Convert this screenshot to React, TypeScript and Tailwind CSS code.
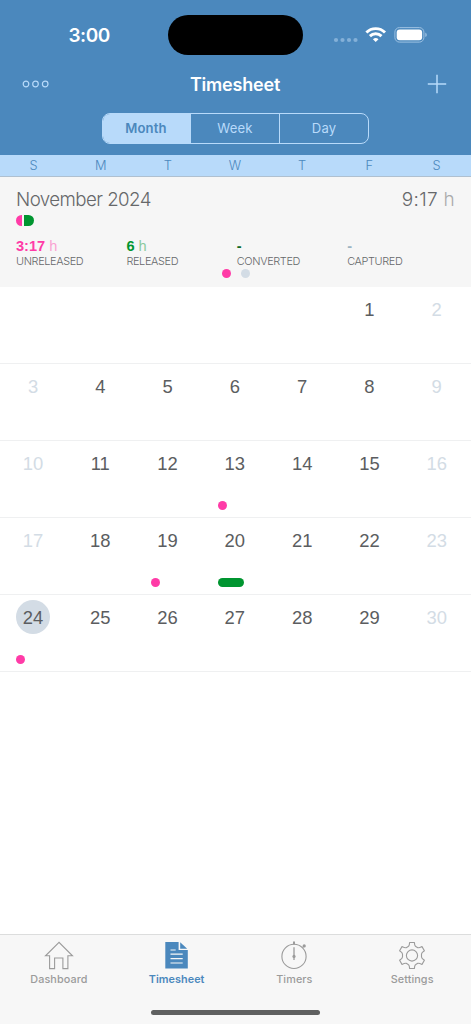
import clsx from "clsx";
import type { ReactNode } from "react";

type Marker = "dot" | "pill";

const weekdays = ["S", "M", "T", "W", "T", "F", "S"];

const markers: Record<number, Marker> = {
	13: "dot",
	19: "dot",
	20: "pill",
	24: "dot",
};

const today = 24;
const firstWeekday = 5;
const daysInMonth = 30;

const weeks = Array.from({ length: 5 }, (_, week) =>
	Array.from({ length: 7 }, (_, weekday) => {
		const day = week * 7 + weekday - firstWeekday + 1;
		return day > 0 && day <= daysInMonth ? day : null;
	}),
);

const totals = [
	{ label: "Unreleased", value: "3:17", unit: "h", color: "text-[#ff3ba7]" },
	{ label: "Released", value: "6", unit: "h", color: "text-[#009530]" },
	{ label: "Converted", value: "-", unit: "", color: "text-[#0f6b25]" },
	{ label: "Captured", value: "-", unit: "", color: "text-[#9db4c2]" },
];

function StatusBar() {
	return (
		<div className="flex h-[70px] items-start pt-[15px]">
			<div className="w-[168px] pl-[68.5px] pt-[7px] text-[19px] font-semibold leading-[27px] tracking-[-0.5px]">
				3:00
			</div>
			<div className="h-[39.5px] w-[135px] rounded-full bg-black" />
			<div className="flex pl-[30px] pt-[11px]">
				<svg width="95" height="18" viewBox="0 0 95 18" fill="none">
					<g fill="#84b0d8">
						<circle cx="3" cy="14" r="2.1" />
						<circle cx="9.5" cy="14" r="2.1" />
						<circle cx="16" cy="14" r="2.1" />
						<circle cx="22.5" cy="14" r="2.1" />
					</g>
					<g stroke="#fff" strokeWidth="2.9">
						<path d="M33.4 6.5a13.1 13.1 0 0 1 18.6 0" />
						<path d="M36.9 10.1a8.2 8.2 0 0 1 11.6 0" />
					</g>
					<path
						d="M42.7 16.1l-2.8-2.9a4.2 4.2 0 0 1 5.6 0z"
						fill="#fff"
					/>
					<rect
						x="61.9"
						y="1.6"
						width="29"
						height="14.5"
						rx="4.5"
						stroke="#9cc1e2"
					/>
					<rect x="63.7" y="3.4" width="25.4" height="10.9" rx="3" fill="#fff" />
					<path d="M92.3 6.6v4.5q1.5-.7 1.5-2.2t-1.5-2.3z" fill="#9cc1e2" />
				</svg>
			</div>
		</div>
	);
}

function NavBar() {
	return (
		<div className="flex h-[43px] items-start justify-between pl-[22px] pr-[24px]">
			<svg
				className="mt-[10px]"
				width="28"
				height="8"
				viewBox="0 0 28 8"
				fill="none"
				stroke="#b8dafa"
				strokeWidth="1.2"
			>
				<circle cx="4" cy="4" r="2.8" />
				<circle cx="13.5" cy="4" r="2.8" />
				<circle cx="23.2" cy="4" r="2.8" />
			</svg>
			<h1 className="mr-[7px] text-[18px] font-semibold leading-[30px] tracking-[-0.2px]">
				Timesheet
			</h1>
			<svg
				className="mt-[4px]"
				width="20"
				height="20"
				viewBox="0 0 20 20"
				stroke="#b8dafa"
				strokeWidth="1.5"
			>
				<path d="M.8 10h18.4M10 .8v18.4" />
			</svg>
		</div>
	);
}

function ViewSwitch() {
	return (
		<div className="mx-auto flex h-[31px] w-[267px] overflow-hidden rounded-lg border border-[#b8dafa] text-[13.1px] leading-[29px] tracking-[0.15px] text-[#b8dafa]">
			<button className="w-[88px] bg-[#b8dafa] pr-[2px] text-center font-semibold text-[#4b88bd]">
				Month
			</button>
			<button className="w-[89px] border-r border-[#b8dafa] text-center">
				Week
			</button>
			<button className="flex-1 text-center">Day</button>
		</div>
	);
}

function Summary() {
	return (
		<section className="relative h-[110px] bg-[#f6f6f6] px-4 pt-[10px] text-[#66686a]">
			<div className="flex justify-between font-light leading-[25px]">
				<h2 className="text-[18.7px] tracking-[-0.55px]">November 2024</h2>
				<div className="text-[19px] tracking-[0.3px]">
					9:17 <span className="text-[#aaabac]">h</span>
				</div>
			</div>
			<div className="mt-[3px] flex h-[11px] gap-[1.5px]">
				<div className="w-1.5 rounded-l-full bg-[#ff3ba7]" />
				<div className="w-[10px] rounded-r-full bg-[#009530]" />
			</div>
			<div className="mt-[13px] flex">
				{totals.map(({ label, value, unit, color }) => (
					<div key={label} className="w-[110.4px] shrink-0">
						<div
							className={clsx(
								"h-[14px] font-['Liberation_Sans',Arial,sans-serif] text-[14.6px] leading-[14px]",
								color,
							)}
						>
							<span className="font-bold">{value}</span>
							{unit && <span className="opacity-45"> {unit}</span>}
						</div>
						<div className="mt-0.5 text-[10.9px] font-light uppercase leading-[13px] tracking-[-0.35px]">
							{label}
						</div>
					</div>
				))}
			</div>
			<div className="absolute left-[222px] top-[92px] flex gap-[9.5px]">
				<span className="size-[9px] rounded-full bg-[#ff3ba7]" />
				<span className="size-[9px] rounded-full bg-[#d3dce5]" />
			</div>
		</section>
	);
}

function DayCell({ day, weekend }: { day: number | null; weekend: boolean }) {
	const marker = day ? markers[day] : undefined;

	return (
		<div className="flex flex-col pt-[5px]">
			<div
				className={clsx(
					"ml-4 flex size-[34px] items-center justify-center rounded-full pt-px",
					day === today && "bg-[#d3dce5]",
					weekend && day !== today ? "text-[#d3dce5]" : "text-[#5b5d60]",
				)}
			>
				{day}
			</div>
			{marker === "dot" && (
				<span className="ml-4 mt-[21px] size-[9px] rounded-full bg-[#ff3ba7]" />
			)}
			{marker === "pill" && (
				<span className="ml-4 mt-[21px] h-[9px] w-[26px] rounded-full bg-[#009530]" />
			)}
		</div>
	);
}

function Calendar() {
	return (
		<div className="font-['Liberation_Sans',Arial,sans-serif] text-[18.4px]">
			{weeks.map((week, row) => (
				<div
					key={row}
					className="grid h-[77px] grid-cols-7 border-b border-[#eff0f1]"
				>
					{week.map((day, i) => (
						<DayCell key={i} day={day} weekend={i === 0 || i === 6} />
					))}
				</div>
			))}
		</div>
	);
}

function Tab({
	label,
	active,
	children,
}: {
	label: string;
	active?: boolean;
	children: ReactNode;
}) {
	return (
		<button
			className={clsx(
				"flex flex-1 flex-col items-center pt-1.5 text-[10.8px] leading-[14px]",
				active
					? "font-semibold tracking-[0.05px] text-[#4b88bd]"
					: "font-medium tracking-[0.1px] text-[#9b9b9b]",
			)}
		>
			<svg
				width="30"
				height="30"
				viewBox="0 0 30 30"
				fill="none"
				stroke="currentColor"
				strokeWidth="1.1"
			>
				{children}
			</svg>
			<span className="mt-0.5">{label}</span>
		</button>
	);
}

function TabBar() {
	return (
		<nav className="mt-auto flex h-[90px] flex-col border-t border-[#dcdddd] bg-[#f7f7f7]">
			<div className="flex">
				<Tab label="Dashboard">
					<path d="M15 1.3L1.5 14.8h4.1v12.8h5V17h8.3v10.6h5V14.8h4.6z" />
				</Tab>
				<Tab label="Timesheet" active>
					<path
						d="M3.3 1h13.3v8h9.2v18.5H3.3z"
						fill="currentColor"
						stroke="none"
					/>
					<path d="M18.2 1.2l7 6.6h-7z" fill="currentColor" stroke="none" />
					<g stroke="#f7f7f7" strokeWidth="1.2">
						<path d="M8.5 9h5.2M8.5 13.2h12.2M8.5 17.6h12.2M8.5 22h12.2" />
					</g>
				</Tab>
				<Tab label="Timers">
					<circle cx="15" cy="15.4" r="12.1" />
					<path d="M15 .5v3" strokeWidth="2" />
					<path d="M23.7 6.4l1.4-1.4" />
					<path d="M15 6.3v12.6" strokeWidth="1.3" />
					<circle cx="15" cy="15.4" r="1.6" fill="currentColor" stroke="none" />
					<circle cx="25.2" cy="4.9" r="1.6" fill="currentColor" stroke="none" />
				</Tab>
				<Tab label="Settings">
					<path
						strokeLinejoin="round"
						d="M12.6 1.5h4.8q.2 3.6 1.4 4.1l2 1.1q1 .5 4.2-1.1l2.4 4.1q-2.9 2-2.9 3.2v3.2q0 1.2 2.9 3.2L25 23.4q-3.2-1.6-4.2-1.1l-2 1.1q-1.2.5-1.4 4.1h-4.8q-.2-3.6-1.4-4.1l-2-1.1q-1-.5-4.2 1.1l-2.4-4.1q2.9-2 2.9-3.2v-3.2q0-1.2-2.9-3.2L5 5.6q3.2 1.6 4.2 1.1l2-1.1q1.2-.5 1.4-4.1z"
					/>
					<circle cx="15" cy="14.5" r="5.6" />
				</Tab>
			</div>
			<div className="mx-auto mt-[22.5px] h-[5.5px] w-[169px] rounded-full bg-[#5f6060]" />
		</nav>
	);
}

export default function App() {
	return (
		<div className="flex h-[1024px] w-[471px] flex-col overflow-hidden bg-white font-['Inter',sans-serif]">
			<header className="h-[155px] shrink-0 bg-[#4b88bd] text-white">
				<StatusBar />
				<NavBar />
				<ViewSwitch />
			</header>
			<div className="grid h-[22px] shrink-0 grid-cols-7 border-b border-[#afc0d0] bg-[#b8dafa] pr-px text-center text-[12.8px] font-light leading-[21px] text-[#4b88bd]">
				{weekdays.map((weekday, i) => (
					<span key={i}>{weekday}</span>
				))}
			</div>
			<Summary />
			<Calendar />
			<TabBar />
		</div>
	);
}
